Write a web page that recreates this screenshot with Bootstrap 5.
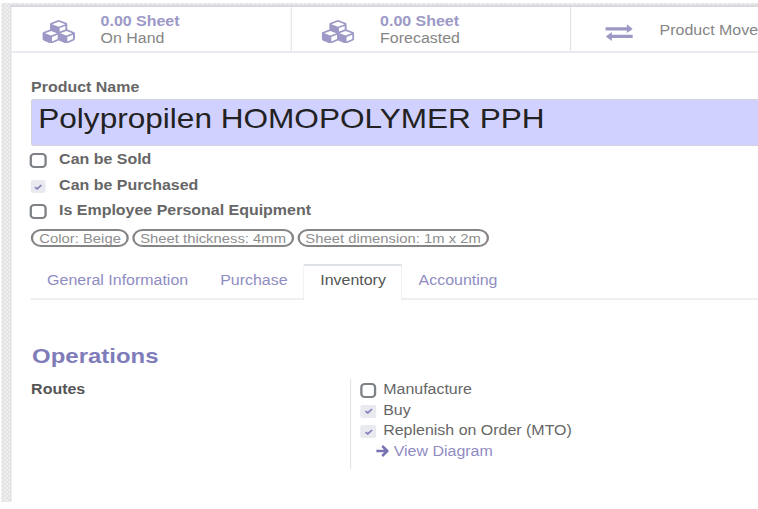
<!DOCTYPE html>
<html lang="en">
<head>
<meta charset="utf-8">
<title>Product form</title>
<link href="https://cdn.jsdelivr.net/npm/bootstrap@5.3.0/dist/css/bootstrap.min.css" rel="stylesheet">
<style>
/* The form is drawn with a wide aspect; --u is one on-screen pixel horizontally */
:root{--k:1.14;--u:calc(1px / 1.14)}
html,body{height:509px;overflow:hidden;background:#fff}
body{font:14px/20px "Liberation Sans",Arial,sans-serif;color:#666}
.page{width:calc(758 * var(--u));height:509px;padding:3px 0 7px var(--u);transform:scaleX(var(--k));transform-origin:0 0;overflow:hidden;white-space:nowrap}
.backdrop{height:499px;padding:2px 0 0 calc(9 * var(--u));background:repeating-conic-gradient(#e4e4e5 0 25%,#efefef 0 50%) 0 0/4px 4px}
.sheet{height:497px;background:#fff;border:solid #d9d8df;border-width:2px 0 0 calc(2 * var(--u))}
.stats{height:46px;border-bottom:2px solid #e8ebef}
.stat{width:calc(279.5 * var(--u));flex:none;border-right:calc(1.5 * var(--u)) solid #e2e4e9;padding-left:calc(30 * var(--u));color:#858585}
.stat.first{width:calc(280.5 * var(--u));padding-left:calc(31 * var(--u))}
.stat.moves{border:0;width:auto;padding-left:calc(34 * var(--u))}
.stat svg{fill:#9c99c7;flex:none}
.stat .cubes{width:calc(33 * var(--u));height:23.5px;margin:5px calc(25.5 * var(--u)) 0 0}
.stat .swap{width:calc(28 * var(--u));height:17px;margin:6px calc(26.5 * var(--u)) 0 0}
.stat .info{line-height:17px;margin-top:2px}
.stat .val{color:#9c99c7;font-weight:700}
.stat.moves .info{margin-top:3px}
.content-area{padding:24px 0 0 calc(20 * var(--u))}
.title-box{height:47px;border:1px solid #d4d3da;border-right:0;border-radius:3px 0 0 3px;background:#d1d1ff;color:#222;font-size:27.7px;line-height:37px;padding-left:calc(6 * var(--u));margin-top:2px}
.opts{padding-top:3px}
.opts .opt{height:25.7px;font-weight:700}
.tick{width:calc(17 * var(--u));height:15px;border:2px solid #7d8084;border-radius:4px;flex:none;background:#fff}
.tick.on{width:calc(15 * var(--u));height:13px;margin-left:var(--u);margin-right:var(--u);border:0;border-radius:2px;background:#e8eaef;display:flex;align-items:center;justify-content:center}
.tick svg{width:7px;height:6px;fill:none;stroke:#8683bd;stroke-width:1.7}
.opts .tick{margin-top:4px;margin-left:calc(-1 * var(--u))}
.opts .tick.on{margin-top:5.5px;margin-left:0}
.opts .txt{margin-left:calc(12 * var(--u))}
.pill{height:18px;border:2px solid #858585;border-radius:9px;font-size:13px;line-height:15px;color:#8e8e8e;text-align:center;flex:none}
.p1{width:calc(98 * var(--u))}.p2{width:calc(162 * var(--u))}.p3{width:calc(192 * var(--u))}
.pills{gap:calc(3 * var(--u));margin-top:3px}
.tabs{margin-top:17px;border-bottom:2px solid #edf0f3;height:36px;flex-wrap:nowrap}
.tabs .nav-link{height:36px;padding:6px calc(16 * var(--u)) 0;border:0 solid #e9ebef;border-radius:2px 2px 0 0;color:#8f8cc2;margin:0;line-height:20px}
.tabs .nav-link.active{border-width:2px calc(1.3 * var(--u)) 0;color:#555;padding:4px calc(15.5 * var(--u)) 0;background:#fff}
.heading{font-size:21px;line-height:28px;font-weight:700;color:#7f7cba;margin:42px 0 0 var(--u)}
.routes{margin-top:9px}
.routes .name{width:calc(319 * var(--u));color:#555}
.choices{height:90px;border-left:calc(1.5 * var(--u)) solid #e3e4e7;padding-left:calc(8.500 * var(--u))}
.choices .opt{height:20.6px}
.choices .tick{margin-top:4px}.choices .tick.on{margin-top:5px}
.choices .txt{margin-left:calc(6.500 * var(--u))}
.diagram{color:#8f8cc2;padding-left:calc(16.500 * var(--u))}
.diagram svg{width:calc(13 * var(--u));height:12px;margin:4px calc(4.500 * var(--u)) 0 0;fill:none;stroke:#7774b3;stroke-width:2.5}
</style>
<script src="https://cdn.jsdelivr.net/npm/bootstrap@5.3.0/dist/js/bootstrap.bundle.min.js"></script>
</head>
<body>
<svg class="d-none">
<symbol id="cubes" viewBox="0 0 2176 1792"><path d="M640 1632l384-192v-314l-384 164v342zm-64-454l404-173-404-173-404 173zm1088 454l384-192v-314l-384 164v342zm-64-454l404-173-404-173-404 173zm-448-293l384-165v-266l-384 164v267zm-64-379l441-189-441-189-441 189zm1088 518v416q0 36-19 67t-52 47l-448 224q-25 14-57 14t-57-14l-448-224q-4-2-7-4-2 2-7 4l-448 224q-25 14-57 14t-57-14l-448-224q-33-16-52-47t-19-67v-416q0-38 21.500-70t56.500-48l434-186v-400q0-38 21.500-70t56.500-48l448-192q23-10 50-10t50 10l448 192q35 16 56.500 48t21.500 70v400l434 186q36 16 57 48t21 70z"/></symbol>
<symbol id="check" viewBox="0 0 7 6"><path d="M.6 3.200L2.600 4.900L6.400 1"/></symbol>
</svg>
<div class="page"><div class="backdrop"><main class="sheet">
  <div class="stats d-flex">
    <div class="stat first d-flex align-items-center"><svg class="cubes"><use href="#cubes"/></svg><div class="info"><div class="val">0.00 Sheet</div><div>On Hand</div></div></div>
    <div class="stat d-flex align-items-center"><svg class="cubes"><use href="#cubes"/></svg><div class="info"><div class="val">0.00 Sheet</div><div>Forecasted</div></div></div>
    <div class="stat moves d-flex align-items-center"><svg class="swap" viewBox="0 0 28 17" preserveAspectRatio="none"><path d="M0 3.200H21.500V.3L27.500 5L21.500 9V6.500H0ZM28 10.800V14H6.500V17L.5 12.400L6.500 8V10.800Z"/></svg><div class="info">Product Move</div></div>
  </div>
  <div class="content-area">
    <div class="fw-bold">Product Name</div>
    <div class="title-box">Polypropilen HOMOPOLYMER PPH</div>
    <div class="opts">
      <div class="opt d-flex"><span class="tick"></span><span class="txt">Can be Sold</span></div>
      <div class="opt d-flex"><span class="tick on"><svg><use href="#check"/></svg></span><span class="txt">Can be Purchased</span></div>
      <div class="opt d-flex"><span class="tick"></span><span class="txt">Is Employee Personal Equipment</span></div>
    </div>
    <div class="pills d-flex"><span class="pill p1">Color: Beige</span><span class="pill p2">Sheet thickness: 4mm</span><span class="pill p3">Sheet dimension: 1m x 2m</span></div>
    <nav class="tabs nav nav-tabs"><a class="nav-link">General Information</a><a class="nav-link">Purchase</a><a class="nav-link active">Inventory</a><a class="nav-link">Accounting</a></nav>
    <h2 class="heading">Operations</h2>
    <div class="routes d-flex">
      <div class="name fw-bold">Routes</div>
      <div class="choices">
        <div class="opt d-flex"><span class="tick"></span><span class="txt">Manufacture</span></div>
        <div class="opt d-flex"><span class="tick on"><svg><use href="#check"/></svg></span><span class="txt">Buy</span></div>
        <div class="opt d-flex"><span class="tick on"><svg><use href="#check"/></svg></span><span class="txt">Replenish on Order (MTO)</span></div>
        <div class="diagram d-flex"><svg viewBox="0 0 13 12" preserveAspectRatio="none"><path d="M0 6H11M6 1L11.200 6L6 11"/></svg><span>View Diagram</span></div>
      </div>
    </div>
  </div>
</main></div></div>
</body>
</html>
